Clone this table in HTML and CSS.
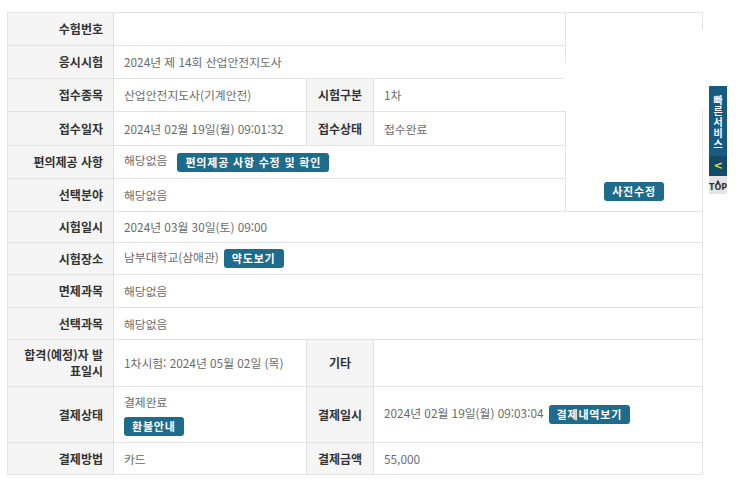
FILE: index.html
```html
<!DOCTYPE html>
<html lang="ko">
<head>
<meta charset="utf-8">
<title>접수내역</title>
<link rel="stylesheet" href="styles.css">
</head>
<body>
<div class="page">
  <div class="table-wrap">
    <table class="info">
      <colgroup>
        <col class="c-label"><col class="c-value"><col class="c-label2"><col class="c-value2"><col class="c-photo">
      </colgroup>
      <tr class="h33">
        <th>수험번호</th>
        <td colspan="3"></td>
        <td class="photo" rowspan="6"><span class="btn">사진수정</span></td>
      </tr>
      <tr class="h33">
        <th>응시시험</th>
        <td colspan="3">2024년 제 14회 산업안전지도사</td>
      </tr>
      <tr class="h33">
        <th>접수종목</th>
        <td>산업안전지도사(기계안전)</td>
        <th class="mid">시험구분</th>
        <td>1차</td>
      </tr>
      <tr class="h34">
        <th>접수일자</th>
        <td>2024년 02월 19일(월) 09:01:32</td>
        <th class="mid">접수상태</th>
        <td>접수완료</td>
      </tr>
      <tr class="h33">
        <th>편의제공 사항</th>
        <td colspan="3">해당없음<span class="btn gap-wide">편의제공 사항 수정 및 확인</span></td>
      </tr>
      <tr class="h33">
        <th>선택분야</th>
        <td colspan="3">해당없음</td>
      </tr>
      <tr class="h31">
        <th>시험일시</th>
        <td colspan="4">2024년 03월 30일(토) 09:00</td>
      </tr>
      <tr class="h32">
        <th>시험장소</th>
        <td colspan="4">남부대학교(삼애관)<span class="btn gap">약도보기</span></td>
      </tr>
      <tr class="h33">
        <th>면제과목</th>
        <td colspan="4">해당없음</td>
      </tr>
      <tr class="h32">
        <th>선택과목</th>
        <td colspan="4">해당없음</td>
      </tr>
      <tr class="h47">
        <th class="wrap">합격(예정)자 발<br>표일시</th>
        <td>1차시험: 2024년 05월 02일 (목)</td>
        <th class="mid">기타</th>
        <td colspan="2"></td>
      </tr>
      <tr class="h56">
        <th>결제상태</th>
        <td><div class="line">결제완료</div><span class="btn block">환불안내</span></td>
        <th class="mid">결제일시</th>
        <td colspan="2">2024년 02월 19일(월) 09:03:04<span class="btn gap">결제내역보기</span></td>
      </tr>
      <tr class="h32">
        <th>결제방법</th>
        <td>카드</td>
        <th class="mid">결제금액</th>
        <td colspan="2">55,000</td>
      </tr>
    </table>
    <div class="mask mask-a"></div>
    <div class="mask mask-b"></div>
  </div>
</div>
<div class="quick">
  <div class="quick-title">빠른서비스</div>
  <div class="quick-arrow">&lt;</div>
  <div class="quick-top"><span class="tri">▲</span><span>TOP</span></div>
</div>
</body>
</html>
```
FILE: styles.css
```css
html, body {
  margin: 0;
  padding: 0;
  background: #fff;
}
body {
  font-family: "Noto Sans CJK KR", "Noto Sans", sans-serif;
  color: #666;
}
.page {
  padding: 12px 0 0 7px;
}
.table-wrap {
  position: relative;
  width: 695px;
}
.info {
  border-collapse: collapse;
  table-layout: fixed;
  width: 695px;
  font-size: 11.8px;
}
.c-label { width: 106px; }
.c-value { width: 193px; }
.c-label2 { width: 67px; }
.c-value2 { width: 192px; }
.c-photo { width: 137px; }
.info th, .info td {
  border: 1px solid #e3e3e3;
  padding: 0 10px;
  vertical-align: middle;
  line-height: 16px;
}
.info th {
  background: #f5f5f5;
  color: #333;
  font-size: 12px;
  font-weight: 700;
  text-align: right;
}
.info th.mid {
  text-align: center;
  padding: 0 4px;
}
.info td {
  color: #6a6a6a;
  text-align: left;
  white-space: nowrap;
}
.h31 { height: 31px; }
.h32 { height: 32px; }
.h33 { height: 33px; }
.h34 { height: 34px; }
.h47 { height: 47px; }
.h56 { height: 56px; }
.info td.photo {
  text-align: center;
  vertical-align: bottom;
  padding-bottom: 10px;
}
.btn {
  display: inline-block;
  height: 19px;
  line-height: 19px;
  padding: 0 8px;
  background: #1e6c8c;
  color: #fff;
  font-size: 11px;
  font-weight: 700;
  border-radius: 3px;
  vertical-align: middle;
  letter-spacing: 0.8px;
}
.btn.gap { margin-left: 5px; }
.btn.gap-wide { margin-left: 10px; }
.btn.block { margin-top: 7px; }
.line { line-height: 16px; }
.mask {
  position: absolute;
  background: #fff;
}
.mask-a {
  left: 557px;
  top: 51px;
  width: 140px;
  height: 47px;
}
.mask-b {
  left: 680px;
  top: 18px;
  width: 18px;
  height: 42px;
}
.quick {
  position: absolute;
  left: 709px;
  top: 86px;
  width: 18px;
  display: flex;
  flex-direction: column;
}
.quick-title {
  background: #175b80;
  color: #fff;
  font-size: 10px;
  font-weight: 700;
  line-height: 11px;
  height: 70px;
  padding: 8px 0 0;
  box-sizing: border-box;
  width: 18px;
  text-align: center;
  word-break: break-all;
  overflow-wrap: anywhere;
}
.quick-arrow {
  background: #124a6a;
  color: #e6e02a;
  font-size: 11px;
  font-weight: 700;
  height: 20px;
  line-height: 20px;
  text-align: center;
  font-family: "DejaVu Sans", sans-serif;
}
.quick-top {
  background: #e4e4e4;
  color: #333;
  height: 18px;
  font-size: 8px;
  font-weight: 700;
  line-height: 8px;
  text-align: center;
  font-family: "DejaVu Sans", sans-serif;
  display: flex;
  flex-direction: column;
  justify-content: center;
  align-items: center;
}
.quick-top .tri {
  font-size: 5px;
  line-height: 6px;
}
```
